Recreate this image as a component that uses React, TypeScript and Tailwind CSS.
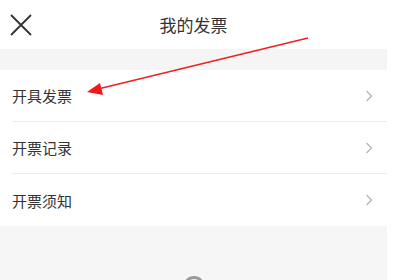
import React from "react";

const items = ["开具发票", "开票记录", "开票须知"];

const Chevron = () => (
  <svg width="8" height="12" viewBox="0 0 8 12" fill="none">
    <path d="M1.5 1 L6.5 6 L1.5 11" stroke="#b5b5b5" strokeWidth="1.3" />
  </svg>
);

const App = () => {
  return (
    <div
      className="relative w-[399px] h-[280px] overflow-hidden bg-white"
      style={{ fontFamily: '"Noto Sans CJK SC", "Noto Sans", sans-serif' }}
    >
      <div className="w-[387px] h-full flex flex-col">
        {/* Header */}
        <div className="h-[49px] flex items-center relative shrink-0">
          <button className="w-[22px] h-[22px] ml-[10px] flex items-center justify-center">
            <svg width="22" height="22" viewBox="0 0 22 22">
              <path d="M1 1 L21 21 M21 1 L1 21" stroke="#333" strokeWidth="1.8" />
            </svg>
          </button>
          <p className="absolute left-0 right-0 text-center text-[17px] text-[#333] leading-none pointer-events-none">
            我的发票
          </p>
        </div>

        <div className="h-[21px] bg-[#f5f5f5] shrink-0"></div>

        {/* Rows */}
        <div className="flex flex-col shrink-0">
          {items.map((item, i) => (
            <div
              key={item}
              className={`h-[52px] ml-[12px] flex items-center justify-between pr-[14px] ${
                i < items.length - 1 ? "border-b border-[#ededed]" : ""
              }`}
            >
              <p className="text-[15px] text-[#333] leading-none">{item}</p>
              <Chevron />
            </div>
          ))}
        </div>

        <div className="flex-1 bg-[#f6f6f6] flex justify-center">
          <div className="mt-[50px] w-[22px] h-[22px] rounded-full border-[3px] border-[#9a9a9a] shrink-0"></div>
        </div>
      </div>

      {/* Annotation arrow */}
      <svg
        className="absolute left-0 top-0 pointer-events-none"
        width="399"
        height="280"
        viewBox="0 0 399 280"
      >
        <line x1="308" y1="38" x2="98" y2="89" stroke="#f02020" strokeWidth="1.4" />
        <polygon points="87,92 100,83 103,95" fill="#f01818" />
      </svg>
    </div>
  );
};

export default App;
